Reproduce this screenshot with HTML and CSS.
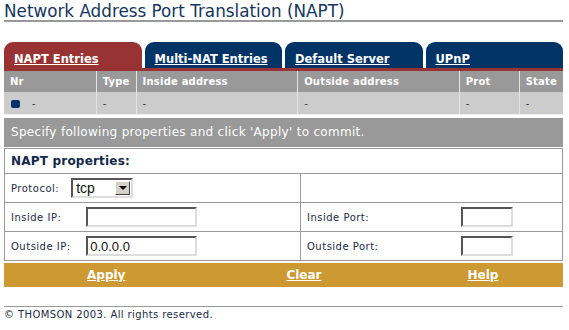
FILE: index.html
```html
<!DOCTYPE html>
<html lang="en">
<head>
  <meta charset="UTF-8">
  <title>NAPT</title>
  <link rel="stylesheet" href="styles.css">
</head>
<body>
  <div class="page">
    <h1 class="title">Network Address Port Translation (NAPT)</h1>

    <div class="tabs">
      <a class="tab active" href="#">NAPT Entries</a>
      <a class="tab" href="#">Multi-NAT Entries</a>
      <a class="tab" href="#">Default Server</a>
      <a class="tab" href="#">UPnP</a>
    </div>

    <table class="entries">
      <tr class="head">
        <th class="c-nr">Nr</th>
        <th class="c-type">Type</th>
        <th class="c-in">Inside address</th>
        <th class="c-out">Outside address</th>
        <th class="c-prot">Prot</th>
        <th>State</th>
      </tr>
      <tr class="row">
        <td><span class="dot"></span>-</td>
        <td>-</td>
        <td>-</td>
        <td>-</td>
        <td>-</td>
        <td>-</td>
      </tr>
    </table>

    <div class="note">Specify following properties and click 'Apply' to commit.</div>

    <table class="props">
      <tr>
        <td colspan="2" class="props-title">NAPT properties:</td>
      </tr>
      <tr>
        <td class="half">
          <span class="label w-proto">Protocol:</span>
          <span class="select">tcp<span class="arrow"></span></span>
        </td>
        <td></td>
      </tr>
      <tr>
        <td class="half">
          <span class="label w-ip">Inside IP:</span>
          <input class="field ip" type="text" value="">
        </td>
        <td>
          <span class="label w-port">Inside Port:</span>
          <input class="field port" type="text" value="">
        </td>
      </tr>
      <tr>
        <td class="half">
          <span class="label w-ip">Outside IP:</span>
          <input class="field ip" type="text" value="0.0.0.0">
        </td>
        <td>
          <span class="label w-port">Outside Port:</span>
          <input class="field port" type="text" value="">
        </td>
      </tr>
    </table>

    <div class="actions">
      <a class="apply" href="#">Apply</a>
      <a class="clear" href="#">Clear</a>
      <a class="help" href="#">Help</a>
    </div>

    <div class="footer">&copy; THOMSON 2003. All rights reserved.</div>
  </div>
</body>
</html>
```

FILE: styles.css
```css
body {
  margin: 0;
  background-color: white;
  font-family: "DejaVu Sans", Verdana, sans-serif;
  color: #1a2a44;
}
.page {
  width: 559px;
  padding: 0 4px;
}
.title {
  margin: 0;
  height: 20px;
  font-size: 16.8px;
  font-weight: normal;
  line-height: 22px;
  color: #16355c;
  border-bottom: 2px solid #999;
  white-space: nowrap;
}
.tabs {
  display: flex;
  gap: 3px;
  margin-top: 20px;
  border-bottom: 3px solid #993333;
}
.tab {
  flex: 1;
  height: 26px;
  box-sizing: border-box;
  padding: 11px 0 0 10px;
  background-color: #003366;
  border-radius: 9px 9px 0 0;
  color: white;
  font-size: 11.5px;
  font-weight: bold;
  line-height: 13px;
}
.tab.active {
  background-color: #993333;
}
.entries {
  width: 100%;
  border-collapse: collapse;
  font-size: 10px;
}
.entries th,
.entries td {
  text-align: left;
  padding: 0 6px;
  border-left: 1px solid #e4e4e4;
  white-space: nowrap;
}
.entries th:first-child,
.entries td:first-child {
  border-left: none;
}
.head th {
  height: 21px;
  background-color: #999999;
  color: white;
  letter-spacing: 0.2px;
}
.row td {
  height: 22px;
  background-color: #cccccc;
  color: #333;
  border-bottom: 1px solid #f0f0f0;
}
.c-nr { width: 80px; }
.c-type { width: 27px; }
.c-in { width: 149px; }
.c-out { width: 149px; }
.c-prot { width: 47px; }
.dot {
  display: inline-block;
  width: 9px;
  height: 8px;
  margin: 0 12px 0 1px;
  background-color: #003366;
  border-radius: 2px;
  vertical-align: -1px;
}
.note {
  margin-top: 3px;
  height: 29px;
  padding-left: 7px;
  background-color: #999999;
  color: white;
  font-size: 12px;
  letter-spacing: 0.3px;
  line-height: 29px;
  border-bottom: 1px solid #ffffff;
}
.props {
  width: 100%;
  border-collapse: collapse;
  border: 1px solid #999;
  font-size: 10px;
}
.props td {
  height: 28px;
  padding: 0 6px;
  border-top: 1px solid #999;
  border-left: 1px solid #999;
  white-space: nowrap;
}
.props .props-title {
  height: 24px;
  border-top: none;
  font-size: 12px;
  font-weight: bold;
  letter-spacing: 0.2px;
  color: #13294b;
}
.half {
  width: 283px;
}
.label {
  display: inline-block;
  vertical-align: middle;
  letter-spacing: 0.5px;
}
.w-proto { width: 57px; }
.w-ip { width: 72px; }
.w-port { width: 151px; }
.select {
  display: inline-flex;
  align-items: center;
  justify-content: space-between;
  width: 62px;
  height: 20px;
  box-sizing: border-box;
  padding: 0 1px 0 3px;
  border: 2px solid;
  border-color: #555 #ddd #ddd #555;
  font-family: "Liberation Sans", Arial, sans-serif;
  font-size: 14px;
  color: #111;
  vertical-align: middle;
}
.arrow {
  position: relative;
  width: 15px;
  height: 14px;
  box-sizing: border-box;
  background-color: #d4d0c8;
  border: 1px solid;
  border-color: #fff #404040 #404040 #fff;
}
.arrow::after {
  content: "";
  position: absolute;
  left: 3px;
  top: 4px;
  border-left: 4px solid transparent;
  border-right: 4px solid transparent;
  border-top: 4px solid #000;
}
.field {
  height: 20px;
  box-sizing: border-box;
  margin: 0;
  padding: 0 2px;
  border: 2px solid;
  border-color: #555 #ddd #ddd #555;
  font-family: "Liberation Sans", Arial, sans-serif;
  font-size: 13px;
  color: #111;
  vertical-align: middle;
}
.ip { width: 111px; }
.port { width: 52px; }
.actions {
  display: flex;
  margin-top: 2px;
  height: 24px;
  background-color: #cc9933;
  font-size: 12px;
  font-weight: bold;
  line-height: 24px;
}
.actions a {
  color: white;
}
.apply { margin-left: 83px; }
.clear { margin-left: 161px; }
.help { margin-left: 146px; }
.footer {
  margin-top: 19px;
  border-top: 1px solid #999;
  padding-top: 2px;
  font-size: 10px;
  letter-spacing: 0.4px;
  color: #1a2a44;
}
```
